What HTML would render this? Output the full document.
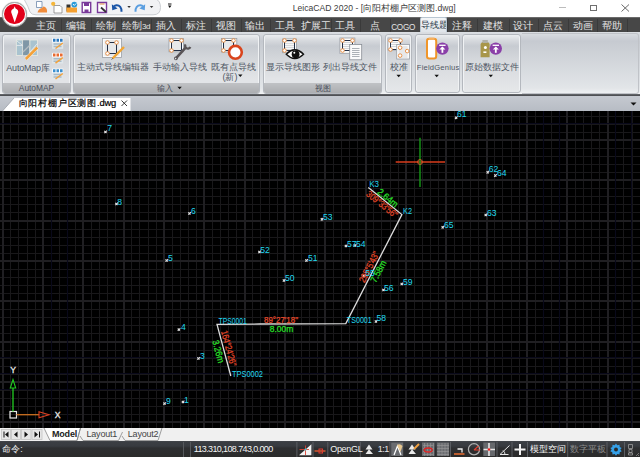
<!DOCTYPE html>
<html><head><meta charset="utf-8">
<style>
*{box-sizing:border-box}
html,body{margin:0;padding:0}
body{width:640px;height:457px;overflow:hidden;position:relative;background:#fff;font-family:"Liberation Sans",sans-serif;}
.a{position:absolute}
#title{left:0;top:0;width:640px;height:18px;background:#fff}
#tabs{left:0;top:18px;width:640px;height:14px;background:#474747}
.tab{position:absolute;top:0.8px;height:14px;overflow:hidden;color:#e4e4e4;font-size:10px;line-height:14px;text-align:center;white-space:nowrap}
.sep{position:absolute;top:1px;width:1px;height:13px;background:#3a3a3a}
#ribbon{left:0;top:32px;width:640px;height:63px;background:linear-gradient(#dcdfe3 0px,#c6cad1 9px,#cdd1d6 20px,#e2e5e8 56px,#eef0f2 61px,#f4f5f6 62px)}
.panel{position:absolute;top:2px;height:60px;border:1px solid #b4b8be;border-radius:3px;background:linear-gradient(#eceef0 0px,#d8dbdf 5px,#c7cbd1 11px,#d4d7db 24px,#e2e4e7 44px);overflow:hidden;box-shadow:inset 1px 0 0 #f0f2f4,inset -1px 0 0 #f0f2f4}
.plabel{position:absolute;left:0;right:0;bottom:0;height:10px;background:linear-gradient(#c0c2c5,#acaeb1);color:#4a4f5a;font-size:8.4px;line-height:11.5px;text-align:center;overflow:hidden}
.btxt{position:absolute;font-size:9px;color:#4e5663;white-space:nowrap;line-height:10px}
#dline{left:0;top:94px;width:640px;height:2px;background:linear-gradient(#6a6c70,#45474b)}
#doctabs{left:0;top:96px;width:640px;height:15px;background:linear-gradient(#c5c9d0,#b7bcc4)}
#draw{left:0;top:111px;width:640px;height:317px;background:#000;overflow:hidden}
#ltabs{left:0;top:428px;width:640px;height:13px;background:#f3f3f3}
#status{left:0;top:441px;width:640px;height:16px;background:linear-gradient(#44474c 0px,#3b3e43 1px,#383b40 5px,#2e2f31 7px,#2b2b2b 16px)}
</style></head><body>

<div id="title" class="a">
<div class="a" style="left:2px;top:2px;width:25px;height:25px;border-radius:50%;background:#fff;border:1px solid #a8a8a8;box-shadow:0 0 1px #888;z-index:3"></div>
<div class="a" style="left:4.3px;top:3.6px;width:20.8px;height:20.8px;border-radius:50%;background:#e2001a;z-index:3"></div>
<svg class="a" style="left:0;top:0;z-index:4" width="30" height="30" viewBox="0 0 30 30"><path d="M14.7 6.3L15.6 8.6C17.6 9.4 18.3 10.6 18.2 12.2L14.7 22.6L11.2 12.2C11.1 10.6 11.8 9.4 13.8 8.6Z" fill="#fff"/></svg>
<svg class="a" style="left:0;top:0;z-index:2" width="180" height="18" viewBox="0 0 180 18">
<path d="M24 -1Q28.5 7 30 12Q31.5 14.8 36 14.8H153Q160.5 14.8 160.5 7.5Q160.5 1 156 -1Z" fill="#f1f2f4" stroke="#c5c8cd" stroke-width="0.9"/>
<path d="M36.5 1.5h5.5v6h-5.5z" fill="#fff" stroke="#5a78a0" stroke-width="0.7"/>
<path d="M37.5 12.5Q38.5 8.5 42 8Q43 5.5 45 7Q47.5 8.5 47 12.5Z" fill="#f08c3c"/>
<path d="M54 5.5h6l2 2v5.5h-8z" fill="#fff" stroke="#777" stroke-width="0.7"/>
<circle cx="53.2" cy="3.8" r="2.1" fill="#f5b63a"/>
<path d="M66.5 4.5h4v7h-4z" fill="#333"/>
<path d="M66.5 7.5h10.5v5h-10.5z" fill="#f5a030"/>
<circle cx="74.3" cy="4.6" r="2.9" fill="#2a9ad8"/><path d="M73 4l1.3 1.4l2-2" stroke="#fff" stroke-width="0.9" fill="none"/>
<path d="M82.2 2.5h8.5v10h-8.5z" fill="#fff" stroke="#7a3a9a" stroke-width="1.4"/><path d="M84 3h5v3h-5z" fill="#7a3a9a"/><path d="M84.5 9.5h4v3h-4z" fill="#7a3a9a"/>
<path d="M97.5 2.5h9v10h-9z" fill="#fff" stroke="#7a3a9a" stroke-width="1.4"/><path d="M99.5 4h5" stroke="#e08a40" stroke-width="1"/><path d="M101 7.5l5 4.5" stroke="#333" stroke-width="1.8"/>
<path d="M121.5 11.8C121.8 7.5 119.5 5 116.5 5.2C115.3 5.3 114.5 5.8 114 6.5" fill="none" stroke="#1a56a8" stroke-width="2"/>
<path d="M111.8 4.2L112.3 10.3L117.6 8.6Z" fill="#1a56a8"/>
<path d="M127.3 6h3.5l-1.75 2z" fill="#333"/>
<path d="M135.5 11.8C135.2 7.5 137.5 5 140.5 5.2C141.7 5.3 142.5 5.8 143 6.5" fill="none" stroke="#5a9ee0" stroke-width="2"/>
<path d="M145.2 4.2L144.7 10.3L139.4 8.6Z" fill="#5a9ee0"/>
<path d="M149.8 6h3.5l-1.75 2z" fill="#333"/>
<path d="M168 3.5h3.5v1h-3.5zM168 5.5h3.5l-1.75 2.5z" fill="#111"/>
</svg>
<div class="a" style="left:292.8px;top:1.8px;font-size:8.6px;color:#404040;line-height:12px;white-space:nowrap">LeicaCAD 2020 - [向阳村棚户区测图.dwg]</div>
<div class="a" style="left:558.5px;top:7px;width:7.5px;height:1px;background:#bcbcbc"></div>
<div class="a" style="left:590px;top:4.7px;width:7px;height:6.5px;border:1px solid #707070"></div>
<svg class="a" style="left:620px;top:3px" width="12" height="10" viewBox="0 0 12 10"><path d="M1.5 1.5L9 8.5M9 1.5L1.5 8.5" stroke="#6a6a6a" stroke-width="1"/></svg>
</div>
<div id="tabs" class="a">
<div class="a" style="left:0;top:-1px;width:640px;height:1px;background:#6a6a6a"></div>
<div class="sep" style="left:61.0px"></div>
<div class="tab" style="left:31.0px;width:30.0px">主页</div>
<div class="sep" style="left:91.0px"></div>
<div class="tab" style="left:61.0px;width:30.0px">编辑</div>
<div class="sep" style="left:121.0px"></div>
<div class="tab" style="left:91.0px;width:30.0px">绘制</div>
<div class="sep" style="left:151.0px"></div>
<div class="tab" style="left:121.0px;width:30.0px">绘制<span style="font-size:8px;letter-spacing:-0.5px">3d</span></div>
<div class="sep" style="left:181.0px"></div>
<div class="tab" style="left:151.0px;width:30.0px">插入</div>
<div class="sep" style="left:211.0px"></div>
<div class="tab" style="left:181.0px;width:30.0px">标注</div>
<div class="sep" style="left:240.6px"></div>
<div class="tab" style="left:211.0px;width:29.6px">视图</div>
<div class="sep" style="left:270.3px"></div>
<div class="tab" style="left:240.6px;width:29.7px">输出</div>
<div class="sep" style="left:300.5px"></div>
<div class="tab" style="left:270.3px;width:30.2px">工具</div>
<div class="sep" style="left:330.5px"></div>
<div class="tab" style="left:300.5px;width:30.0px">扩展工</div>
<div class="sep" style="left:360.0px"></div>
<div class="tab" style="left:330.5px;width:29.5px">工具</div>
<div class="sep" style="left:390.0px"></div>
<div class="tab" style="left:360.0px;width:30.0px">点</div>
<div class="sep" style="left:420.3px"></div>
<div class="tab" style="left:388.0px;width:30.3px"><span style="font-size:8.2px;letter-spacing:-0.3px;position:relative;top:0.8px">COGO</span></div>
<div class="sep" style="left:447.0px"></div>
<div class="sep" style="left:477.0px"></div>
<div class="tab" style="left:447.0px;width:30.0px">注释</div>
<div class="sep" style="left:508.7px"></div>
<div class="tab" style="left:477.0px;width:31.7px">建模</div>
<div class="sep" style="left:538.3px"></div>
<div class="tab" style="left:508.7px;width:29.6px">设计</div>
<div class="sep" style="left:567.8px"></div>
<div class="tab" style="left:538.3px;width:29.5px">点云</div>
<div class="sep" style="left:597.4px"></div>
<div class="tab" style="left:567.8px;width:29.6px">动画</div>
<div class="sep" style="left:627.0px"></div>
<div class="tab" style="left:597.4px;width:29.6px">帮助</div>
<div class="a" style="left:420.3px;top:-1px;width:26.7px;height:15px;border:1px solid #b8c6d2;border-bottom:none;border-radius:2px 2px 0 0;background:linear-gradient(#f4f6f8,#dfe4e9);color:#2a3a48;font-size:9px;line-height:15px;text-align:center;white-space:nowrap;overflow:hidden">导线题</div>
</div>
<div id="ribbon" class="a"><div class="a" style="left:522px;top:1px;width:117px;height:61px;border:1px solid #c0c3c8;border-left:none;border-radius:0 3px 3px 0"></div>
<div class="panel" style="left:2.0px;width:69.0px;"><div class="plabel">AutoMAP</div></div>
<div class="panel" style="left:73.0px;width:186.6px;"><div class="plabel" style="text-align:left;padding-left:83px">输入</div></div>
<div class="panel" style="left:262.7px;width:119.8px;"><div class="plabel">视图</div></div>
<div class="panel" style="left:385.3px;width:26.9px;height:59px;background:linear-gradient(#eceef0 0px,#d8dbdf 5px,#c7cbd1 11px,#d6d9dd 26px,#e6e8ea 58px)"></div>
<div class="panel" style="left:414.5px;width:45.7px;height:59px;background:linear-gradient(#eceef0 0px,#d8dbdf 5px,#c7cbd1 11px,#d6d9dd 26px,#e6e8ea 58px)"></div>
<div class="panel" style="left:461.5px;width:59.1px;height:59px;background:linear-gradient(#eceef0 0px,#d8dbdf 5px,#c7cbd1 11px,#d6d9dd 26px,#e6e8ea 58px)"></div>
</div>
<div class="btxt" style="left:6.3px;top:62.5px;font-size:9.0px;letter-spacing:-0.2px">AutoMap库</div>
<div class="btxt" style="left:77.3px;top:61.5px;font-size:9.0px;">主动式导线编辑器</div>
<div class="btxt" style="left:153.0px;top:61.5px;font-size:9.0px;">手动输入导线</div>
<div class="btxt" style="left:211.0px;top:61.5px;font-size:9.0px;">既有点导线</div>
<div class="btxt" style="left:222.5px;top:71.5px;font-size:9.0px;">(新)</div>
<div class="btxt" style="left:265.9px;top:61.5px;font-size:9.0px;">显示导线图形</div>
<div class="btxt" style="left:323.4px;top:61.5px;font-size:9.0px;">列出导线文件</div>
<div class="btxt" style="left:389.5px;top:61.5px;font-size:9.0px;">校准</div>
<div class="btxt" style="left:416.8px;top:62.5px;font-size:7.6px;letter-spacing:0.2px">FieldGenius</div>
<div class="btxt" style="left:464.5px;top:61.5px;font-size:9.0px;">原始数据文件</div>
<svg class="a" style="left:0;top:0;z-index:2" width="640" height="96" viewBox="0 0 640 96"><rect x="16.3" y="40" width="6.5" height="15.4" fill="#a9c3cf" stroke="#ecebe2" stroke-width="0.8"/><rect x="22.8" y="40" width="7.1" height="15.4" fill="#7f97a6" stroke="#ecebe2" stroke-width="0.5"/><rect x="29.9" y="40" width="7.7" height="15.4" fill="#a9c3cf" stroke="#ecebe2" stroke-width="0.8"/>
<path d="M16.5 45.4H22.8M17 41L22.5 45.4M30 52L37.3 43.5" stroke="#e6ebee" stroke-width="0.9"/><path d="M23 52L29.5 45.5" stroke="#b4bcc2" stroke-width="1.2"/>
<path d="M25.8 59L37.3 47.5" stroke="#fff" stroke-width="3.8" opacity="0.7"/><path d="M25.8 59L37.3 47.5" stroke="#f4a23a" stroke-width="2.6"/><rect x="52.2" y="38.2" width="11" height="10.6" fill="#dfe6ea"/><rect x="52.2" y="38.2" width="11" height="4.2" fill="#fff"/><path d="M53 40.3h2.5M56.5 40.3h2.5M60 40.3h2.6" stroke="#2a78c0" stroke-width="3"/><path d="M53.5 44.0h8M53.5 46.5h8" stroke="#a8bac6" stroke-width="1.4"/><path d="M55.5 48.5L62.8 43.0" stroke="#f4a23a" stroke-width="1.5"/><rect x="52.2" y="52.9" width="11" height="10.6" fill="#dfe6ea"/><rect x="52.2" y="52.9" width="11" height="4.2" fill="#fff"/><path d="M53 55.0h2.5M56.5 55.0h2.5M60 55.0h2.6" stroke="#e86a30" stroke-width="3"/><path d="M53.5 58.7h8M53.5 61.2h8" stroke="#a8bac6" stroke-width="1.4"/><path d="M55.5 63.2L62.8 57.7" stroke="#f4a23a" stroke-width="1.5"/><rect x="52.2" y="68.7" width="11" height="10.6" fill="#dfe6ea"/><rect x="52.2" y="68.7" width="11" height="4.2" fill="#fff"/><path d="M53 70.8h2.5M56.5 70.8h2.5M60 70.8h2.6" stroke="#3a90d0" stroke-width="3"/><path d="M53.5 74.5h8M53.5 77.0h8" stroke="#a8bac6" stroke-width="1.4"/><path d="M55.5 79.0L62.8 73.5" stroke="#f4a23a" stroke-width="1.5"/><rect x="102.5" y="38.5" width="19.0" height="19.0" fill="#fbfbfb" stroke="#9a9fa6" stroke-width="0.8"/><path d="M104.5 41.0H119.5M104.5 43.0H119.5M104.5 45.0H119.5M104.5 47.0H119.5M104.5 49.0H119.5M104.5 51.0H119.5M104.5 53.0H119.5M104.5 55.0H119.5" stroke="#b8bcc2" stroke-width="0.6"/><path d="M107.5 42.5H116.5V53.5H107.5Z" fill="none" stroke="#243046" stroke-width="1"/><circle cx="107.5" cy="42.5" r="1.8" fill="#fff" stroke="#e5883a" stroke-width="0.9"/><circle cx="116.5" cy="42.5" r="1.8" fill="#fff" stroke="#e5883a" stroke-width="0.9"/><circle cx="107.5" cy="53.5" r="1.8" fill="#fff" stroke="#e5883a" stroke-width="0.9"/><path d="M112.5 58.5L124 47" stroke="#f2a634" stroke-width="2.4"/><path d="M111.6 59.6l1.3-1.5" stroke="#666" stroke-width="1"/><rect x="169.0" y="38.5" width="14.5" height="13.3" fill="#fbfbfb" stroke="#9a9fa6" stroke-width="0.8"/><path d="M171.0 41.0H181.5M171.0 43.0H181.5M171.0 45.0H181.5M171.0 47.0H181.5M171.0 49.0H181.5" stroke="#b8bcc2" stroke-width="0.6"/><path d="M171.5 40.5H181.5V50.5H171.5Z" fill="none" stroke="#243046" stroke-width="1"/><circle cx="171.5" cy="40.5" r="1.8" fill="#fff" stroke="#e5883a" stroke-width="0.9"/><circle cx="181.5" cy="40.5" r="1.8" fill="#fff" stroke="#e5883a" stroke-width="0.9"/><circle cx="171.5" cy="50.5" r="1.8" fill="#fff" stroke="#e5883a" stroke-width="0.9"/><path d="M175.9 58.3L185.2 48.2" stroke="#595457" stroke-width="2.6" stroke-linecap="round"/><circle cx="175.9" cy="58.3" r="1.9" fill="#595457"/><circle cx="175.6" cy="58.6" r="0.8" fill="#dde0e4"/><path d="M185.6 44.4A2.7 2.7 0 1 0 190.3 47" fill="none" stroke="#595457" stroke-width="2.3"/><rect x="221.5" y="38.5" width="15.3" height="13.5" fill="#fbfbfb" stroke="#9a9fa6" stroke-width="0.8"/><path d="M223.5 41.0H234.8M223.5 43.0H234.8M223.5 45.0H234.8M223.5 47.0H234.8M223.5 49.0H234.8" stroke="#b8bcc2" stroke-width="0.6"/><path d="M223.5 40.5H233.5V50.5H223.5Z" fill="none" stroke="#243046" stroke-width="1"/><circle cx="223.5" cy="40.5" r="1.8" fill="#fff" stroke="#e5883a" stroke-width="0.9"/><circle cx="233.5" cy="40.5" r="1.8" fill="#fff" stroke="#e5883a" stroke-width="0.9"/><circle cx="223.5" cy="50.5" r="1.8" fill="#fff" stroke="#e5883a" stroke-width="0.9"/><circle cx="235.4" cy="52.3" r="6.4" fill="#fff" stroke="#d9441c" stroke-width="2.6"/><rect x="282.6" y="38.9" width="13.8" height="13.8" fill="#fbfbfb" stroke="#9a9fa6" stroke-width="0.8"/><path d="M284.6 41.4H294.4M284.6 43.4H294.4M284.6 45.4H294.4M284.6 47.4H294.4M284.6 49.4H294.4" stroke="#b8bcc2" stroke-width="0.6"/><path d="M284.5 40.5H294.5V50.5H284.5Z" fill="none" stroke="#243046" stroke-width="1"/><circle cx="284.5" cy="40.5" r="1.8" fill="#fff" stroke="#e5883a" stroke-width="0.9"/><circle cx="294.5" cy="40.5" r="1.8" fill="#fff" stroke="#e5883a" stroke-width="0.9"/><circle cx="284.5" cy="50.5" r="1.8" fill="#fff" stroke="#e5883a" stroke-width="0.9"/><path d="M285.3 54.2Q294.8 44 304.5 54.2Q294.8 64.4 285.3 54.2Z" fill="#111"/><path d="M287.3 54.2Q294.8 46.8 302.5 54.2Q294.8 61.6 287.3 54.2Z" fill="#fff"/><circle cx="295.6" cy="54.2" r="3.9" fill="#111"/><circle cx="294.3" cy="52.8" r="1" fill="#fff"/><rect x="339.9" y="38.0" width="15.0" height="15.3" fill="#fbfbfb" stroke="#9a9fa6" stroke-width="0.8"/><path d="M341.9 40.5H352.9M341.9 42.5H352.9M341.9 44.5H352.9M341.9 46.5H352.9M341.9 48.5H352.9M341.9 50.5H352.9" stroke="#b8bcc2" stroke-width="0.6"/><path d="M342.5 40.5H352.5V50.5H342.5Z" fill="none" stroke="#243046" stroke-width="1"/><circle cx="342.5" cy="40.5" r="1.8" fill="#fff" stroke="#e5883a" stroke-width="0.9"/><circle cx="352.5" cy="40.5" r="1.8" fill="#fff" stroke="#e5883a" stroke-width="0.9"/><circle cx="342.5" cy="50.5" r="1.8" fill="#fff" stroke="#e5883a" stroke-width="0.9"/><rect x="349.7" y="44.4" width="12" height="15.4" fill="#fbfbfb" stroke="#8a8f96" stroke-width="0.8"/><path d="M352 48.5H359.5M352 50.5H359.5M352 52.5H359.5M352 54.5H359.5M352 56.5H359.5" stroke="#8a9098" stroke-width="0.7"/><rect x="388.0" y="38.0" width="12.0" height="12.0" fill="#fbfbfb" stroke="#9a9fa6" stroke-width="0.8"/><path d="M390.0 40.5H398.0M390.0 42.5H398.0M390.0 44.5H398.0M390.0 46.5H398.0" stroke="#b8bcc2" stroke-width="0.6"/><path d="M390.5 40.5H400.5V49.5H390.5Z" fill="none" stroke="#243046" stroke-width="1"/><circle cx="390.5" cy="40.5" r="1.8" fill="#fff" stroke="#e5883a" stroke-width="0.9"/><circle cx="400.5" cy="40.5" r="1.8" fill="#fff" stroke="#e5883a" stroke-width="0.9"/><circle cx="390.5" cy="49.5" r="1.8" fill="#fff" stroke="#e5883a" stroke-width="0.9"/><rect x="396.7" y="44.5" width="12.8" height="14.5" fill="#fbfbfb" stroke="#9a9fa6" stroke-width="0.8"/><path d="M398.7 47.0H407.5M398.7 49.0H407.5M398.7 51.0H407.5M398.7 53.0H407.5M398.7 55.0H407.5M398.7 57.0H407.5" stroke="#b8bcc2" stroke-width="0.6"/><circle cx="400.1" cy="47.7" r="1.8" fill="#fff" stroke="#e5883a" stroke-width="0.9"/><circle cx="407.2" cy="51.1" r="1.8" fill="#fff" stroke="#e5883a" stroke-width="0.9"/><circle cx="400.1" cy="55.6" r="1.8" fill="#fff" stroke="#e5883a" stroke-width="0.9"/><rect x="427" y="38.8" width="9.2" height="19.6" rx="2.2" fill="#fff" stroke="#f0962a" stroke-width="2"/><rect x="428.5" y="37.8" width="6.2" height="1.6" rx="0.8" fill="#f6b060"/>
<circle cx="442.4" cy="48.6" r="6.2" fill="#8a3fa8"/><path d="M439.2 45.3H445.6" stroke="#fff" stroke-width="1.3"/><path d="M442.4 52.8V47.6" stroke="#fff" stroke-width="1.8"/><path d="M439.4 49.6L442.4 46.4L445.4 49.6Z" fill="#fff"/>
<path d="M480.6 44V57.2H489.6V44L488 42H482.2Z" fill="#a8964a"/><rect x="482.4" y="40" width="5.4" height="3" fill="#b0b0a8"/><circle cx="485.4" cy="47.6" r="1.5" fill="#fff"/><rect x="483.4" y="51.4" width="3" height="1.6" fill="#fff"/>
<circle cx="495.8" cy="48.6" r="6.2" fill="#8a3fa8"/><path d="M492.6 45.3H499" stroke="#fff" stroke-width="1.3"/><path d="M495.8 52.8V47.6" stroke="#fff" stroke-width="1.8"/><path d="M492.8 49.6L495.8 46.4L498.8 49.6Z" fill="#fff"/><path d="M396.5 74.7h4.4l-2.2 2.6z" fill="#111"/><path d="M434.5 74.7h4.4l-2.2 2.6z" fill="#111"/><path d="M488.6 74.7h4.4l-2.2 2.6z" fill="#111"/><path d="M238.1 74.5h4.4l-2.2 2.6z" fill="#111"/><path d="M177.4 86.7h4.4l-2.2 2.6z" fill="#111"/></svg>

<div id="dline" class="a"></div>
<div id="doctabs" class="a">
<svg class="a" style="left:0;top:0" width="640" height="15" viewBox="0 96 640 15"><path d="M2.5 111L14 98H130.5V111Z" fill="#fff"/><path d="M2.5 111L14 98" stroke="#9aa0a8" stroke-width="0.8" fill="none"/><path d="M630.5 102.5H636.5L633.5 105.5Z" fill="#111"/></svg>
<div class="a" style="left:18.6px;top:1.3px;font-size:9px;line-height:12px;color:#000;white-space:nowrap;-webkit-text-stroke:0.2px #000"><span style="letter-spacing:0.8px">向阳村棚户区测图</span><span style="font-size:9.4px;letter-spacing:-0.2px">.dwg</span></div>
<svg class="a" style="left:120px;top:3px" width="9" height="9" viewBox="0 0 9 9"><path d="M1.5 1.5L7 7M7 1.5L1.5 7" stroke="#222" stroke-width="0.9"/></svg>
</div>
<div id="draw" class="a"></div>
<svg class="a" style="left:0;top:111px" width="640" height="317" viewBox="0 111 640 317">
<path d="M10.5 111V428M18.5 111V428M27.5 111V428M35.5 111V428M51.5 111V428M59.5 111V428M67.5 111V428M75.5 111V428M91.5 111V428M99.5 111V428M107.5 111V428M115.5 111V428M131.5 111V428M139.5 111V428M148.5 111V428M156.5 111V428M172.5 111V428M180.5 111V428M188.5 111V428M196.5 111V428M212.5 111V428M220.5 111V428M228.5 111V428M236.5 111V428M252.5 111V428M260.5 111V428M269.5 111V428M277.5 111V428M293.5 111V428M301.5 111V428M309.5 111V428M317.5 111V428M333.5 111V428M341.5 111V428M349.5 111V428M357.5 111V428M373.5 111V428M381.5 111V428M390.5 111V428M398.5 111V428M414.5 111V428M422.5 111V428M430.5 111V428M438.5 111V428M454.5 111V428M462.5 111V428M470.5 111V428M478.5 111V428M494.5 111V428M502.5 111V428M511.5 111V428M519.5 111V428M535.5 111V428M543.5 111V428M551.5 111V428M559.5 111V428M575.5 111V428M583.5 111V428M591.5 111V428M599.5 111V428M615.5 111V428M623.5 111V428M632.5 111V428M640.5 111V428M0 116.5H640M0 124.5H640M0 132.5H640M0 148.5H640M0 156.5H640M0 164.5H640M0 172.5H640M0 188.5H640M0 196.5H640M0 204.5H640M0 212.5H640M0 229.5H640M0 237.5H640M0 245.5H640M0 253.5H640M0 269.5H640M0 277.5H640M0 285.5H640M0 293.5H640M0 309.5H640M0 317.5H640M0 325.5H640M0 333.5H640M0 350.5H640M0 358.5H640M0 366.5H640M0 374.5H640M0 390.5H640M0 398.5H640M0 406.5H640M0 414.5H640" stroke="#19181a" stroke-width="1" fill="none"/>
<path d="M3.0 111V428M43.0 111V428M83.0 111V428M124.0 111V428M164.0 111V428M204.0 111V428M245.0 111V428M285.0 111V428M325.0 111V428M366.0 111V428M406.0 111V428M446.0 111V428M487.0 111V428M527.0 111V428M567.0 111V428M608.0 111V428M0 140.0H640M0 180.0H640M0 221.0H640M0 261.0H640M0 301.0H640M0 342.0H640M0 382.0H640M0 422.0H640" stroke="#201f22" stroke-width="2" fill="none"/>

<path d="M0 123.5H640M0 357.5H640M0 373.5H640M0 389.5H640M51.5 111V428M67.5 111V428M543.5 111V428M559.5 111V428M615.5 111V428M631.5 111V428" stroke="#09091a" stroke-width="1.1" fill="none"/>
<path d="M104.3 133.2l2.6 -2.6M104.3 130.8l2.2 2.2M115.3 205.2l2.6 -2.6M115.3 202.8l2.2 2.2M188.3 214.7l2.6 -2.6M188.3 212.3l2.2 2.2M165.5 261.7l2.6 -2.6M165.5 259.3l2.2 2.2M258.3 253.2l2.6 -2.6M258.3 250.8l2.2 2.2M282.8 281.7l2.6 -2.6M282.8 279.3l2.2 2.2M305.3 261.7l2.6 -2.6M305.3 259.3l2.2 2.2M320.8 220.5l2.6 -2.6M320.8 218.1l2.2 2.2M344.8 247.2l2.6 -2.6M344.8 244.8l2.2 2.2M353.8 246.7l2.6 -2.6M353.8 244.3l2.2 2.2M362.8 277.2l2.6 -2.6M362.8 274.8l2.2 2.2M382.3 291.2l2.6 -2.6M382.3 288.8l2.2 2.2M400.6 285.2l2.6 -2.6M400.6 282.8l2.2 2.2M441.6 228.5l2.6 -2.6M441.6 226.1l2.2 2.2M455.0 119.0l2.6 -2.6M455.0 116.6l2.2 2.2M486.6 173.5l2.6 -2.6M486.6 171.1l2.2 2.2M494.2 176.8l2.6 -2.6M494.2 174.4l2.2 2.2M484.6 216.2l2.6 -2.6M484.6 213.8l2.2 2.2M374.8 322.7l2.6 -2.6M374.8 320.3l2.2 2.2M177.7 330.9l2.6 -2.6M177.7 328.5l2.2 2.2M197.3 359.7l2.6 -2.6M197.3 357.3l2.2 2.2M163.4 404.9l2.6 -2.6M163.4 402.5l2.2 2.2M181.8 403.2l2.6 -2.6M181.8 400.8l2.2 2.2" stroke="#e4e4e4" stroke-width="1.1" fill="none"/>
<path d="M368.3 187.4L401.9 214.6L345.8 323.6L260 324L217 324.4L230.8 376" stroke="#dcdcdc" stroke-width="1.3" fill="none"/>
<g font-family="Liberation Sans" font-size="9.4" stroke-width="0.25"><text transform="translate(388.04 197.85) rotate(38.99)" x="-11.75" y="3.38" fill="#2ae02a" stroke="#2ae02a" textLength="23.5" lengthAdjust="spacingAndGlyphs">2.64m</text><text transform="translate(382.10 204.23) rotate(38.99)" x="-18.50" y="3.38" fill="#e4482a" stroke="#e4482a" textLength="37.0" lengthAdjust="spacingAndGlyphs">309°33'56"</text><text transform="translate(368.91 266.90) rotate(-62.77)" x="-16.75" y="3.38" fill="#e4482a" stroke="#e4482a" textLength="33.5" lengthAdjust="spacingAndGlyphs">295°5'43"</text><text transform="translate(378.21 271.34) rotate(-62.77)" x="-11.75" y="3.38" fill="#2ae02a" stroke="#2ae02a" textLength="23.5" lengthAdjust="spacingAndGlyphs">7.58m</text><text transform="translate(228.87 348.25) rotate(75.03)" x="-18.25" y="3.38" fill="#e4482a" stroke="#e4482a" textLength="36.5" lengthAdjust="spacingAndGlyphs">164°24'26"</text><text transform="translate(218.54 351.43) rotate(75.03)" x="-11.75" y="3.38" fill="#2ae02a" stroke="#2ae02a" textLength="23.5" lengthAdjust="spacingAndGlyphs">3.26m</text><text x="264" y="322.5" fill="#e4482a" stroke="#e4482a" textLength="34" lengthAdjust="spacingAndGlyphs">89°27'18"</text><text x="269.8" y="332" fill="#2ae02a" stroke="#2ae02a" textLength="23.5" lengthAdjust="spacingAndGlyphs">8.00m</text></g>
<g font-family="Liberation Sans" font-size="8.6" fill="#22d8f0"><text x="107.3" y="131.0">7</text><text x="117.2" y="204.5">8</text><text x="191.0" y="213.5">6</text><text x="167.9" y="260.8">5</text><text x="260.3" y="252.6">52</text><text x="285.0" y="281.0">50</text><text x="308.0" y="261.0">51</text><text x="323.0" y="220.0">53</text><text x="347.0" y="247.0">57</text><text x="356.0" y="247.0">54</text><text x="365.2" y="275.6">55</text><text x="384.0" y="290.5">56</text><text x="403.0" y="285.0">59</text><text x="444.0" y="227.5">65</text><text x="457.0" y="117.4">61</text><text x="488.8" y="172.4">62</text><text x="497.0" y="175.7">64</text><text x="487.1" y="215.6">63</text><text x="376.5" y="321.0">58</text><text x="181.0" y="329.5">4</text><text x="200.0" y="358.5">3</text><text x="166.0" y="404.0">9</text><text x="184.0" y="402.5">1</text><text x="369.2" y="186.8" textLength="9.8" lengthAdjust="spacingAndGlyphs">K3</text><text x="403.0" y="214.0" textLength="9.0" lengthAdjust="spacingAndGlyphs">K2</text><text x="346.8" y="323.2" textLength="25.0" lengthAdjust="spacingAndGlyphs">TS0001</text><text x="218.6" y="323.7" textLength="28.2" lengthAdjust="spacingAndGlyphs">TPS0001</text><text x="232.0" y="377.0" textLength="31.0" lengthAdjust="spacingAndGlyphs">TPS0002</text></g>
<path d="M395.7 162H445" stroke="#d83c1c" stroke-width="1.4"/>
<path d="M420 137.8V187" stroke="#169a16" stroke-width="1.4"/>
<circle cx="420" cy="162" r="2.4" fill="none" stroke="#d8662a" stroke-width="0.9"/>
<rect x="10" y="411.5" width="6.5" height="6.5" fill="none" stroke="#e8e8e8" stroke-width="1.2"/>
<path d="M13 411.5V388" stroke="#22cc22" stroke-width="1.3"/>
<path d="M10.3 388L13 379.5L15.7 388Z" fill="none" stroke="#22cc22" stroke-width="1.1"/>
<path d="M16.5 414.7H39" stroke="#cc7020" stroke-width="1.3"/>
<path d="M39 411.7L49 414.7L39 417.7Z" fill="none" stroke="#dd4020" stroke-width="1.1"/>
<text x="10.3" y="372.8" font-family="Liberation Sans" font-size="8.6" fill="#e8e8e8" stroke="#e8e8e8" stroke-width="0.3">Y</text>
<text x="54.8" y="417.8" font-family="Liberation Sans" font-size="8.6" fill="#e8e8e8" stroke="#e8e8e8" stroke-width="0.3">X</text>
</svg>
<div id="ltabs" class="a">
<svg class="a" style="left:0;top:0" width="640" height="13" viewBox="0 428 640 13">
<rect x="0" y="428" width="640" height="13" fill="#f0f0f0"/>
<g fill="#e6e6e6" stroke="#c4c4c4" stroke-width="0.8"><rect x="1.5" y="429.5" width="9" height="10"/><rect x="11.5" y="429.5" width="9" height="10"/><rect x="21.5" y="429.5" width="9.5" height="10"/><rect x="32" y="429.5" width="10" height="10"/></g>
<g fill="#111"><path d="M3.5 431.5h1v6h-1z M8.5 431.5v6l-3.5-3z"/><path d="M17.5 431.5v6l-3.5-3z"/><path d="M24.5 431.5v6l3.5-3z"/><path d="M34.5 431.5v6l3.5-3z M39 431.5h1v6h-1z"/></g>
<path d="M44 428L50 440.5H77L80.5 428" fill="#fff" stroke="#888" stroke-width="0.8"/>
<path d="M80.5 428L77 440.5M80 436L83 440.5H118.5L122.5 432M122 436L125 440.5H158L162 428" fill="none" stroke="#888" stroke-width="0.8"/>
</svg>
<div class="a" style="left:52px;top:1px;font-size:9px;line-height:11px;font-weight:bold;color:#222;letter-spacing:-0.2px">Model</div>
<div class="a" style="left:86.5px;top:1px;font-size:9px;line-height:11px;color:#444;letter-spacing:-0.2px">Layout1</div>
<div class="a" style="left:127.8px;top:1px;font-size:9px;line-height:11px;color:#444;letter-spacing:-0.2px">Layout2</div>
</div>
<div id="status" class="a">
<svg class="a" style="left:0;top:0" width="640" height="16" viewBox="0 441 640 16">
<g stroke="#5a5d62" stroke-width="1"><path d="M296.9 442V457M313 442V457M327.8 442V457M360.3 442V457M390 442V457M450.5 442V457M497 442V457M512 442V457M527.5 442V457M567.7 442V457M607 442V457M624.5 442V457"/></g>
<path d="M299 455.2L311.4 444.3V455.2Z" fill="#f2f2f2"/><path d="M299.5 449.5H309M305.5 445.5V455" stroke="#e04030" stroke-width="0.9"/><circle cx="305.5" cy="449.5" r="1" fill="#30d0e0"/>
<path d="M314.5 451H325.5" stroke="#e05a30" stroke-width="1.4"/><rect x="319" y="449" width="3.5" height="4" fill="none" stroke="#e03a30" stroke-width="1"/>
<path d="M369 444.5L365.5 449.5L368.8 449.5L365.5 454H373L369.2 449.5H372.5Z" fill="#eaeaea"/>
<rect x="391.2" y="442.5" width="12" height="13.5" fill="#6a6c70"/><path d="M394 455L397.5 446L401 455" fill="none" stroke="#fff" stroke-width="1.2"/><path d="M397 445Q400 443 402.5 446L400.5 452Z" fill="#e8c890"/>
<path d="M412 444.5L408.5 449.5L411.8 449.5L408.5 454H416L412.2 449.5H415.5Z" fill="#eaeaea"/><path d="M414 449L419 444" stroke="#f0a040" stroke-width="2"/>
<rect x="422" y="442.5" width="12.5" height="13.5" fill="#6a6c70"/><path d="M423 445.5H433.5M423 448.5H433.5M423 451.5H433.5M423 454.5H433.5M424.5 443V456M427.5 443V456M430.5 443V456M433.5 443V456" stroke="#999" stroke-width="0.6"/><ellipse cx="428.2" cy="450" rx="4" ry="2" fill="none" stroke="#e02020" stroke-width="1.3"/>
<rect x="436.8" y="442.5" width="12.3" height="13.5" fill="#6a6c70"/><path d="M437 445.5H449M437 448.5H449M437 451.5H449M437 454.5H449M439 443V456M442 443V456M445 443V456M448 443V456" stroke="#9a9a9a" stroke-width="0.6"/>
<path d="M454 454H464.5" stroke="#e06a30" stroke-width="1.6"/><path d="M457.5 449H462V452.5" stroke="#eee" stroke-width="1.3" fill="none"/>
<circle cx="474" cy="449.3" r="5.6" fill="none" stroke="#b0b0b0" stroke-width="1.3"/><path d="M474 450L478.5 446M474 450H480" stroke="#e04030" stroke-width="1.1"/>
<rect x="483.3" y="442.5" width="11.7" height="13.5" fill="#66686c"/><path d="M489 443V456M483.5 449.5H495" stroke="#e6e6e6" stroke-width="1.6"/><circle cx="489" cy="449.5" r="1.3" fill="#ee2020"/>
<path d="M500 454.5L509.5 445.5M500 454.5H508.5M503 450.5Q505 452 505 454.5" stroke="#e6e6e6" stroke-width="1" fill="none"/>
<path d="M514.5 449.5H525.5M520 444V455" stroke="#f4f4f4" stroke-width="2"/>
<path d="M616 443.5l1.3 1.8l2.2 -0.6l0.2 2.2l2 1l-1.4 1.7l1.4 1.7l-2 1l-0.2 2.2l-2.2 -0.6l-1.3 1.8l-1.3 -1.8l-2.2 0.6l-0.2 -2.2l-2 -1l1.4 -1.7l-1.4 -1.7l2 -1l0.2 -2.2l2.2 0.6z" fill="#35a0e8"/><circle cx="616" cy="449.5" r="2" fill="#2b2b2b"/>
<path d="M628.5 444.5h4v4h-4zM629 449.5h3v3h-3zM628.5 453h4v2h-4z" fill="none" stroke="#9a9a9a" stroke-width="0.8"/>
<path d="M636 456l3 -3M638 456l1 -1" stroke="#888" stroke-width="0.8"/>
</svg>
<div class="a" style="left:2.3px;top:2.3px;font-size:8.8px;line-height:12px;color:#f0f0f0">命令:</div>
<div class="a" style="left:183px;top:1px;width:1px;height:15px;background:#55585c"></div>
<div class="a" style="left:190px;top:1px;width:1px;height:15px;background:#55585c"></div>
<div class="a" style="left:193.7px;top:2px;font-size:9px;line-height:12px;color:#f4f4f4;letter-spacing:-0.62px">113.310,108.743,0.000</div>
<div class="a" style="left:330.2px;top:2px;font-size:9px;line-height:12px;color:#f4f4f4;letter-spacing:-0.3px">OpenGL</div>
<div class="a" style="left:377.7px;top:2px;font-size:9px;line-height:12px;color:#e8e8e8;letter-spacing:-0.5px">1:1</div>
<div class="a" style="left:529.5px;top:1.5px;font-size:9px;line-height:12px;color:#f4f4f4">模型空间</div>
<div class="a" style="left:569.9px;top:1.5px;font-size:9px;line-height:12px;color:#8a8a8a">数字平板</div>
</div>

</body></html>
